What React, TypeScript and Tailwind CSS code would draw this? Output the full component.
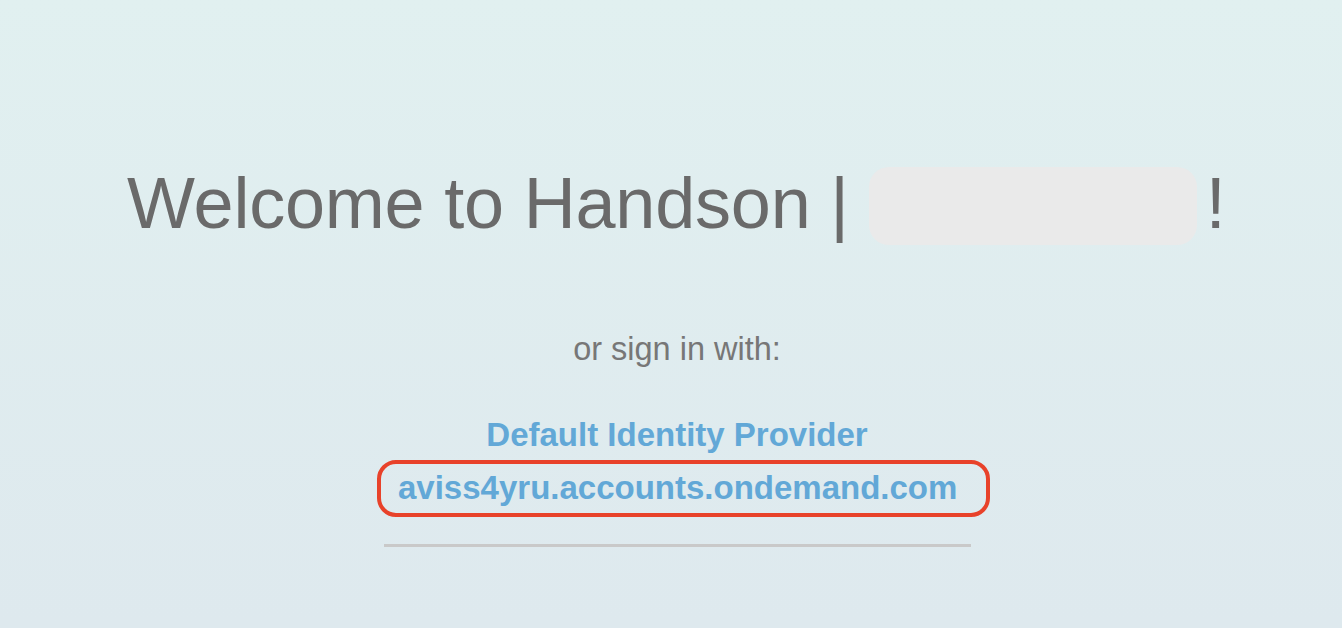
export default function App() {
  return (
    <div className="h-screen w-full overflow-hidden bg-linear-to-b from-[#e1f0f0] to-[#dee9ee] font-['Liberation_Sans',Arial,sans-serif]">
      <div className="flex flex-col items-center pt-[167px] pl-[12px]">
        {/* Heading with redacted org name */}
        <h1 className="mr-[1px] whitespace-nowrap text-[72px] leading-none font-normal text-[#6a6a6a]">
          <span className="tracking-[-0.2px]">Welcome to Handson |</span>{" "}
          <span className="inline-block h-[78px] w-[328px] rounded-[20px] bg-[#eaeaea] align-[-17px]" />
          <span className="ml-[9px]">!</span>
        </h1>

        <p className="mt-[88px] text-[32.5px] leading-[32px] text-[#777777]">or sign in with:</p>

        <a href="#" className="mt-[53px] text-[33px] leading-none font-bold text-[#62a8d7]">
          Default Identity Provider
        </a>

        <a
          href="#"
          className="mt-[9px] ml-[13px] w-[613px] rounded-[19px] border-4 border-[#e8422a] pt-[7px] pb-[9px] pl-[17px] text-[33px] leading-none font-bold text-[#62a8d7]"
        >
          aviss4yru.accounts.ondemand.com
        </a>

        <div className="mt-[27px] h-[3px] w-[587px] bg-[#c9c9c9]" />
      </div>
    </div>
  );
}
